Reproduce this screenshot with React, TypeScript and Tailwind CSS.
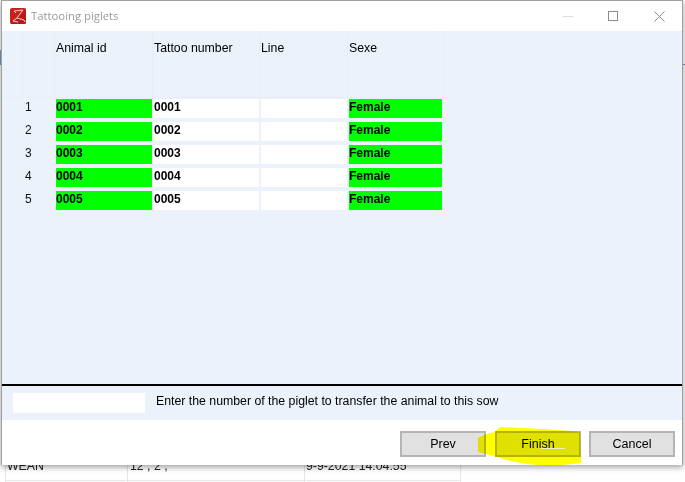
const rows = ['0001', '0002', '0003', '0004', '0005'];

function Logo() {
  return (
    <svg width="16" height="16" viewBox="0 0 16 16" className="shrink-0">
      <rect x="0" y="0" width="16" height="16" rx="2" fill="#c8201c" />
      <path d="M0 16 L16 0 V16 Z" fill="#a81818" opacity="0.55" />
      <path d="M4 3 L13 2 L7 10 L14 12 L15 14 M4 3 L6 5 M7 10 L3 13 L8 14" fill="none" stroke="#f4d4d0" strokeWidth="1" />
    </svg>
  );
}

function HeaderCell({ label, width }: { label?: string; width: string }) {
  return (
    <div className={`${width} shrink-0 border-r border-[#e8ecf3] pl-[1px] pt-[9px] text-[12.3px] leading-[16px] text-black`}>
      {label}
    </div>
  );
}

function Row({ n, id }: { n: number; id: string }) {
  return (
    <div className="flex h-[19px] mb-[4px] text-[12px] leading-[16px] font-bold text-black">
      <div className="w-[54px] shrink-0 pl-[23px] font-normal text-[#111]">{n}</div>
      <div className="w-[96px] shrink-0 bg-[#00ff00]">{id}</div>
      <div className="w-[106px] ml-[1px] shrink-0 bg-white pl-[1px]">{id}</div>
      <div className="w-[86px] ml-[2px] shrink-0 bg-white" />
      <div className="w-[93px] ml-[2px] shrink-0 bg-[#00ff00]">Female</div>
    </div>
  );
}

function Button({ label, className }: { label: string; className?: string }) {
  return (
    <button className={`h-[26px] w-[86px] border-2 border-[#b4b4b4] bg-[#e1e1e1] text-[12.5px] text-black ${className ?? ''}`}>
      {label}
    </button>
  );
}

export default function App() {
  return (
    <div
      className="relative h-[482px] w-[685px] overflow-hidden bg-white"
      style={{ fontFamily: '"Liberation Sans", Arial, sans-serif' }}
    >
      {/* app behind the dialog */}
      <div className="absolute left-0 top-[50px] h-[15px] w-[1px] bg-[#7f9cc4]" />
      <div className="absolute left-[683px] top-[64px] h-[1px] w-[2px] bg-[#7f8fa8]" />
      <div className="absolute left-[5px] top-[455px] w-[456px] text-[12.3px] leading-[14px] text-[#222]">
        <div className="flex h-[26px] border-b border-[#e6e6e6]">
          <div className="w-[123px] border-x border-[#e6e6e6] pl-[1px] pt-[4px]">WEAN</div>
          <div className="w-[177px] border-r border-[#e6e6e6] pl-[2px] pt-[4px]">12 , 2 ,</div>
          <div className="flex-1 border-r border-[#e6e6e6] pl-[1px] pt-[4px]">9-9-2021 14:04:55</div>
        </div>
        <div className="flex h-[10px]">
          <div className="w-[123px] border-x border-[#e6e6e6]" />
          <div className="w-[177px] border-r border-[#e6e6e6]" />
          <div className="flex-1 border-r border-[#e6e6e6]" />
        </div>
      </div>

      {/* dialog */}
      <div className="absolute left-[1px] top-0 flex h-[465px] w-[682px] flex-col border border-[#a0a0a0] border-b-0 bg-white shadow-[0_2px_6px_rgba(0,0,0,0.4)]">
        <div className="flex h-[30px] shrink-0 items-center bg-white pl-[8px] pr-[17px]">
          <Logo />
          <span className="ml-[5px] text-[11.3px] text-[#9a9a9a]" style={{ fontFamily: '"Open Sans", sans-serif' }}>
            Tattooing piglets
          </span>
          <div className="ml-auto flex items-center">
            <div className="h-[1px] w-[10px] bg-[#dcdcdc]" />
            <div className="ml-[35px] h-[10px] w-[10px] border border-[#8c8c8c]" />
            <svg width="11" height="11" viewBox="0 0 11 11" className="ml-[36px]">
              <path d="M0.5 0.5 L10.5 10.5 M10.5 0.5 L0.5 10.5" stroke="#8c8c8c" strokeWidth="1" />
            </svg>
          </div>
        </div>

        <div className="flex h-[389px] shrink-0 flex-col bg-[#ebf2fc]">
          <div className="flex h-[67px] shrink-0 w-[442px] border-b border-[#e8ecf3]">
            <HeaderCell width="w-[21px]" />
            <HeaderCell width="w-[32px]" />
            <HeaderCell width="w-[98px]" label="Animal id" />
            <HeaderCell width="w-[107px]" label="Tattoo number" />
            <HeaderCell width="w-[88px]" label="Line" />
            <HeaderCell width="w-[96px]" label="Sexe" />
          </div>
          <div className="pt-[1px]">
            {rows.map((id, i) => (
              <Row key={id} n={i + 1} id={id} />
            ))}
          </div>
          <div className="mt-auto h-[2px] bg-black" />
          <div className="flex h-[34px] shrink-0 items-start pl-[11px] pt-[7px]">
            <div className="h-[20px] w-[132px] bg-white" />
            <span className="ml-[11px] pt-[0px] text-[12.3px] leading-[16px] text-black">
              Enter the number of the piglet to transfer the animal to this sow
            </span>
          </div>
        </div>

        <div className="flex flex-1 items-start justify-end pr-[7px] pt-[11px]">
          <Button label="Prev" />
          <Button label="Finish" className="ml-[9px]" />
          <Button label="Cancel" className="ml-[8px]" />
        </div>
      </div>

      {/* highlighter scribble */}
      <svg width="110" height="42" viewBox="0 0 110 42" className="absolute left-[476px] top-[426px] mix-blend-multiply">
        <path
          d="M25 1 C50 2 85 4 104 6 L105 37 C90 39 70 40 61 39 C50 38 40 36 31 34 C22 31 10 28 2 26 L2 12 C6 9 14 7 19 6 C20 4 22 2 25 1 Z"
          fill="#ffff00"
        />
      </svg>
      <div className="absolute left-[541px] top-[448px] h-[1px] w-[24px] bg-[#e8f0d8]" />
    </div>
  );
}
